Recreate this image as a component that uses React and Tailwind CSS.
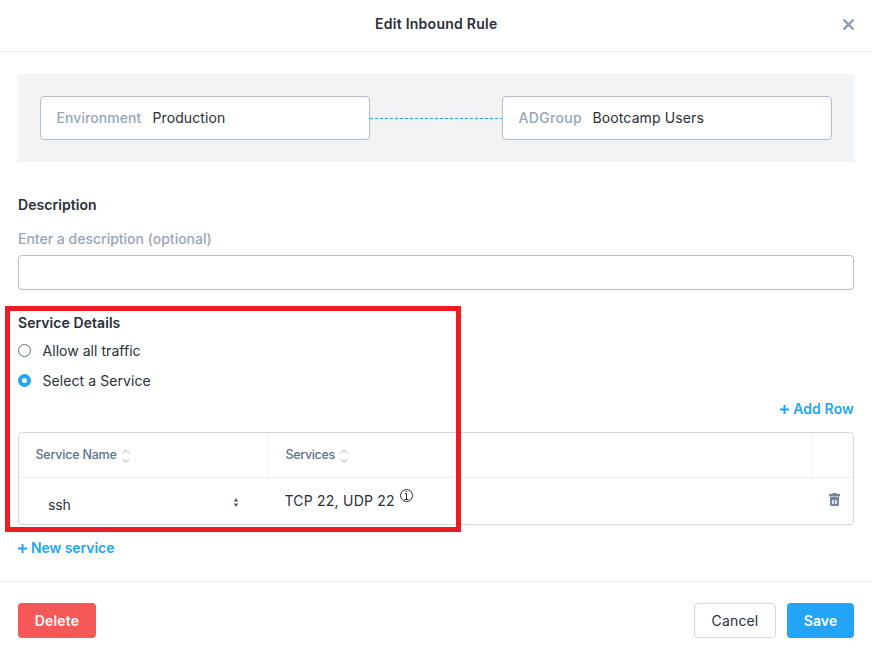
import React from "react";

function SortIcon() {
  return (
    <svg width="8" height="14" viewBox="0 0 8 14" fill="none" stroke="#d6dbe2" strokeWidth="1.800" className="mt-[2px]">
      <path d="M0.600 4.400 4 1.200 7.400 4.400M0.600 9.800 4 13 7.400 9.800" />
    </svg>
  );
}

function PlusIcon() {
  return (
    <svg width="9" height="9" viewBox="0 0 9 9" stroke="#22a5f7" strokeWidth="2">
      <path d="M0 4.5H9M4.5 0V9" />
    </svg>
  );
}

function TrashIcon() {
  return (
    <svg width="11" height="13" viewBox="0 0 11 13">
      <path fill="#73859f" d="M0 1h3L4 0h3l1 1h3V3H0z" />
      <path fill="#b9c2cf" d="M0 3h11v1H0z" />
      <path fill="#73859f" d="M1 4h9v7.600c0 .8-.5 1.400-1.300 1.400H2.300C1.500 13 1 12.400 1 11.600z" />
      <path fill="#dfe4ea" d="M3 7h2v4H3zM6 7h2v4H6z" />
    </svg>
  );
}

function Endpoint({ kind, value, kindClass, valueClass }) {
  return (
    <div className="flex h-11 w-[330px] items-center rounded border border-[#b5bdca] bg-white pl-[15.5px]">
      <span className={`font-medium text-[#9aa5b5] ${kindClass}`}>{kind}</span>
      <span className={valueClass}>{value}</span>
    </div>
  );
}

export default function App() {
  return (
    <div className="relative flex h-[655px] w-[872px] flex-col overflow-hidden bg-white font-['Inter',sans-serif] text-[14px] leading-5 text-[#2a2f38]">
      <header className="flex h-[52px] shrink-0 items-center justify-between border-b border-[#f0f1f3] pr-[18px] pb-[3px] pl-[375px]">
        <h1 className="font-semibold whitespace-nowrap tracking-[0.26px]">Edit Inbound Rule</h1>
        <svg width="11" height="11" viewBox="0 0 11 11" stroke="#8f9db2" strokeWidth="2.3" className="mt-px">
          <path d="M0.500 0.500 10.500 10.500M10.500 0.500 0.500 10.500" />
        </svg>
      </header>

      <main className="flex h-[529px] shrink-0 flex-col px-[18px] pt-[22px]">
        <div className="flex h-[88px] items-center bg-[#f2f3f5] px-[22px]">
          <Endpoint kind="Environment" value="Production" kindClass="w-[96px] tracking-[0.08px]" valueClass="tracking-[0.1px]" />
          <svg width="132" height="1" className="shrink-0">
            <path d="M0 0.500H132" stroke="#22a5f7" strokeDasharray="3 2" />
          </svg>
          <Endpoint kind="ADGroup" value="Bootcamp Users" kindClass="w-[74px] tracking-[0.32px]" valueClass="tracking-[0.12px]" />
        </div>

        <h2 className="mt-[33px] font-semibold tracking-[0.05px]">Description</h2>
        <label className="mt-[14px] font-medium text-[#9aa5b5]">Enter a description (optional)</label>
        <div className="mt-[6px] h-[35px] rounded border border-[#b5bdca]" />

        <h2 className="mt-[23px] font-semibold tracking-[0.06px]">Service Details</h2>
        <div className="mt-[8px] flex items-center">
          <span className="mr-[11.5px] mb-px size-[13px] rounded-full border border-[#5f7088]" />
          <span className="tracking-[0.04px]">Allow all traffic</span>
        </div>
        <div className="mt-[10px] flex items-center">
          <span className="mr-[11.5px] mb-px size-[13px] rounded-full border-4 border-[#22a5f7] bg-white" />
          <span className="tracking-[0.08px]">Select a Service</span>
        </div>
        <div className="mt-[8px] flex items-center justify-end gap-[4px] font-semibold text-[#22a5f7]">
          <PlusIcon />
          <span className="tracking-[0.12px]">Add Row</span>
        </div>

        <div className="mt-[13px] h-[93px] shrink-0 rounded border border-[#d3d8df]">
          <div className="flex h-[45px] border-b border-[#f0f1f3] text-[12.5px] font-medium text-[#62728a]">
            <div className="flex w-[250px] items-center gap-[5.5px] border-r border-[#f0f1f3] pl-[16.5px]">
              <span className="tracking-[-0.22px]">Service Name</span>
              <SortIcon />
            </div>
            <div className="flex w-[543px] items-center gap-[5.5px] border-r border-[#f0f1f3] pl-[16.5px]">
              <span className="tracking-[-0.35px]">Services</span>
              <SortIcon />
            </div>
          </div>
          <div className="flex h-[46px]">
            <div className="flex w-[250px] justify-between pt-[17px] pr-[31px] pl-[29px]">
              <span className="tracking-[-0.1px]">ssh</span>
              <svg width="4" height="9" viewBox="0 0 4 9" fill="#4d5f78" className="mt-[3px]">
                <path d="M0 3 2 0 4 3zM0 3h4v.6H0zM0 5.400h4V6H0zM0 6h4L2 9z" />
              </svg>
            </div>
            <div className="flex w-[543px] pt-[13px] pl-[15.5px]">
              <span className="tracking-[0.22px]">TCP 22, UDP 22</span>
              <svg width="13" height="13" viewBox="0 0 13 13" fill="none" stroke="#2a2f38" className="-mt-[2px] ml-[5px]">
                <circle cx="6.500" cy="6.500" r="6" />
                <path d="M5 4.500h1.500v5.500M4.500 10.500h4M5.800 2.500h1.400" />
              </svg>
            </div>
            <div className="flex-1 pt-[15px] pl-[17px]">
              <TrashIcon />
            </div>
          </div>
        </div>

        <div className="mt-[13px] flex items-center gap-[4px] font-semibold text-[#22a5f7]">
          <PlusIcon />
          <span className="tracking-[-0.06px]">New service</span>
        </div>
      </main>

      <footer className="flex flex-1 items-start border-t border-[#f0f1f3] px-[18px] pt-[21px]">
        <button className="h-[35px] w-[78px] rounded bg-[#f65757] font-semibold tracking-[0.2px] text-white">Delete</button>
        <button className="ml-auto h-[35px] w-[82px] rounded border border-[#d3d8df] tracking-[0.15px]">Cancel</button>
        <button className="ml-[11px] h-[35px] w-[67px] rounded bg-[#22a5f7] font-semibold tracking-[0.1px] text-white">Save</button>
      </footer>

      <div className="pointer-events-none absolute top-[306px] left-[5px] h-[226px] w-[456px] border-[5px] border-[#ed1c24]" />
    </div>
  );
}
